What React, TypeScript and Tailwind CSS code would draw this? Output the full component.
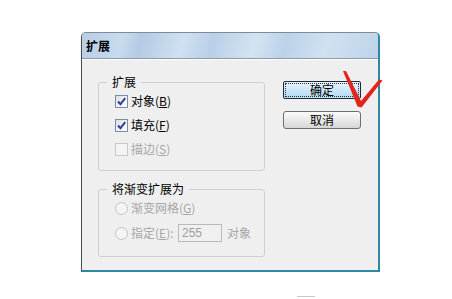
import React from "react";

function CheckBox({ checked, disabled }: { checked?: boolean; disabled?: boolean }) {
  return (
    <span
      className={
        "flex h-[13px] w-[13px] shrink-0 items-center justify-center border " +
        (disabled
          ? "border-[#c9c9c9] bg-[#f4f4f4]"
          : "border-[#7b8aa6] bg-[linear-gradient(135deg,#dcdcdc_0%,#f6f6f6_60%,#ffffff_100%)]")
      }
    >
      {checked && (
        <svg width="11" height="11" viewBox="0 0 11 11">
          <path d="M2 5.5 L4.5 8.2 L9.2 2.2" fill="none" stroke="#2b3f96" strokeWidth="2" />
        </svg>
      )}
    </span>
  );
}

function Radio() {
  return (
    <span className="flex h-[13px] w-[13px] shrink-0 items-center justify-center rounded-full border border-[#c4c4c4] bg-[#f4f4f4]" />
  );
}

export default function App() {
  return (
    <div className="relative h-[299px] w-[452px] bg-white pl-[81px] pt-[32px] font-['Noto_Sans_CJK_SC','Liberation_Sans',sans-serif] text-[12px] leading-[14px] text-black">
      <div className="flex h-[240px] w-[299px] flex-col rounded-t-[5px] border-b-2 border-l border-r-2 border-t border-b-[#2f87a3] border-l-[#4d4d4d] border-r-[#2f87a3] border-t-[#7f8a96] bg-[#efefef]">
        {/* title bar */}
        <div className="flex h-[26px] shrink-0 items-center rounded-t-[4px] border-b border-b-[#8d9aa6] bg-[linear-gradient(105deg,#b7cee6_0%,#c8dbee_14%,#b4cbe4_20%,#cfe0f1_34%,#b9d0e8_44%,#d3e3f2_58%,#bcd2e9_68%,#d0e1f1_82%,#bed4ea_100%)] pl-[4px] text-[12px] font-bold">
          扩展
        </div>
        {/* body */}
        <div className="flex flex-1 border-t border-t-white pl-[16px]">
          <div className="flex w-[167px] flex-col">
            <fieldset className="mt-[15px] flex flex-col gap-[6px] rounded-[3px] border border-[#cfcfcf] pb-[12px] pl-[16px] pt-[3px]">
              <legend className="-ml-[8px] px-[5px] leading-[14px]">扩展</legend>
              <div className="flex h-[18px] items-center">
                <CheckBox checked />
                <span className="ml-[3px]">
                  对象(<u>B</u>)
                </span>
              </div>
              <div className="flex h-[18px] items-center">
                <CheckBox checked />
                <span className="ml-[3px]">
                  填充(<u>F</u>)
                </span>
              </div>
              <div className="flex h-[18px] items-center text-[#a7a7a7]">
                <CheckBox disabled />
                <span className="ml-[3px]">
                  描边(<u>S</u>)
                </span>
              </div>
            </fieldset>
            <fieldset className="mt-[11px] flex flex-col gap-[7px] rounded-[3px] border border-[#cfcfcf] pb-[14px] pl-[16px] pt-[3px]">
              <legend className="-ml-[8px] px-[5px] leading-[14px]">将渐变扩展为</legend>
              <div className="flex h-[18px] items-center text-[#a7a7a7]">
                <Radio />
                <span className="ml-[3px]">
                  渐变网格(<u>G</u>)
                </span>
              </div>
              <div className="flex h-[18px] items-center text-[#a7a7a7]">
                <Radio />
                <span className="ml-[3px] w-[47px]">
                  指定(<u>E</u>):
                </span>
                <span className="flex h-[18px] w-[44px] items-center border border-[#b9b9b9] bg-[#f0f0f0] pl-[3px] font-['Liberation_Sans',sans-serif] text-[12px] text-[#9d9d9d]">
                  255
                </span>
                <span className="ml-[5px]">对象</span>
              </div>
            </fieldset>
          </div>
          <div className="ml-[18px] flex w-[78px] flex-col gap-[12px] pt-[21px]">
            <div className="flex h-[18px] items-center justify-center rounded-[2px] border border-[#1c2b3c] bg-[linear-gradient(#eaf5fc,#cbe6f7_50%,#b5daf3)] p-[1px]">
              <div className="flex h-full w-full items-center justify-center border border-dotted border-[#333]">
                确定
              </div>
            </div>
            <div className="flex h-[18px] items-center justify-center rounded-[3px] border border-[#6f6f6f] bg-[linear-gradient(#fbfbfb,#e9e9e9_50%,#d6d6d6)]">
              取消
            </div>
          </div>
        </div>
      </div>
      <div className="ml-[216px] mt-[24px] h-[1px] w-[18px] bg-[#c8c8c8]" />
      <svg className="pointer-events-none absolute left-0 top-0" width="452" height="299" viewBox="0 0 452 299">
        <path
          d="M343 71 L346 71 L361 101 L379 79.5 L382.5 80.5 L361.5 107.5 L357.5 106.5 Z"
          fill="#e3231c"
        />
      </svg>
    </div>
  );
}
